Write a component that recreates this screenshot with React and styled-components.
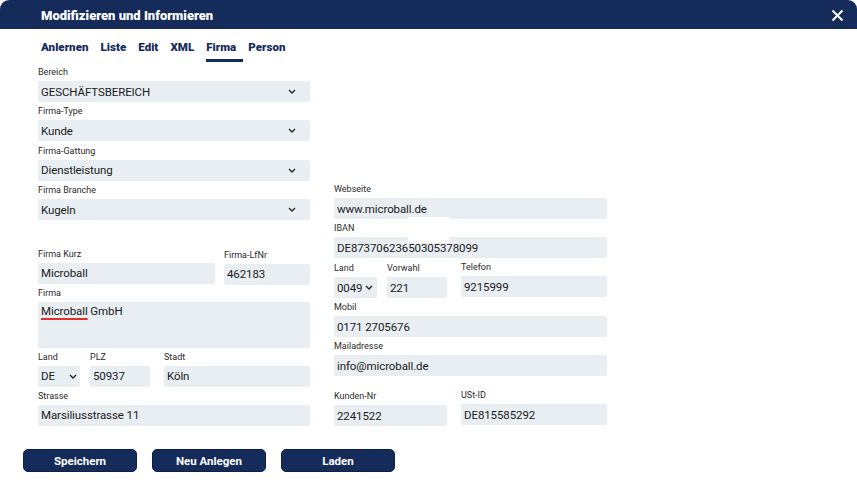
import React from "react";
import styled, { createGlobalStyle } from "styled-components";

const Global = createGlobalStyle`
  html, body { margin: 0; padding: 0; background: #fff; }
  body { font-family: Roboto, "Liberation Sans", sans-serif; color: #1b1b1b; }
  * { box-sizing: border-box; }
`;

const NAVY = "#152c5b";
const FIELD = "#e9eef3";

const Dialog = styled.div`
  width: 857px;
  height: 498px;
  background: #fff;
`;

const Header = styled.div`
  height: 29px;
  background: ${NAVY};
  border-radius: 9px 9px 0 0;
  display: flex;
  align-items: center;
  justify-content: space-between;
  padding: 0 13px 0 41px;
`;

const Title = styled.div`
  color: #fff;
  font-weight: 900;
  font-size: 13px;
  letter-spacing: 0;
  padding-top: 1px;
`;

const Close = styled.svg`
  width: 13px;
  height: 13px;
  margin-top: 2px;
`;

const Tabs = styled.div`
  display: flex;
  gap: 12px;
  padding: 11px 0 0 41px;
`;

const Tab = styled.div`
  font-weight: 900;
  font-size: 11.5px;
  letter-spacing: 0.05px;
  color: ${NAVY};
  padding-bottom: 8px;
  position: relative;
  ${(p) =>
    p.$active &&
    `&::after { content: ""; position: absolute; left: 0; bottom: 0; width: 37px; height: 3px; background: ${NAVY}; }`}
`;

const Body = styled.div`
  display: flex;
  gap: 24px;
  padding: 4px 0 0 38px;
`;

const Column = styled.div`
  width: ${(p) => p.$w}px;
  display: flex;
  flex-direction: column;
  margin-top: ${(p) => p.$top || 0}px;
  position: relative;
`;

const Row = styled.div`
  display: flex;
  gap: ${(p) => p.$gap || 10}px;
  align-items: flex-end;
  margin-top: ${(p) => p.$mt || 0}px;
`;

const Group = styled.div`
  display: flex;
  flex-direction: column;
  width: ${(p) => (p.$w ? `${p.$w}px` : "auto")};
  flex: ${(p) => (p.$w ? "none" : "1")};
  margin-left: ${(p) => p.$ml || 0}px;
  margin-bottom: ${(p) => p.$mb || 0}px;
`;

const Label = styled.div`
  font-size: 9px;
  line-height: 12px;
  height: 12px;
  color: #2a2a2a;
  margin: 0 0 3px 0;
  white-space: nowrap;
`;

const Field = styled.div`
  height: ${(p) => p.$h || 21}px;
  background: ${FIELD};
  border-radius: 2px;
  display: flex;
  align-items: ${(p) => (p.$area ? "flex-start" : "center")};
  justify-content: space-between;
  padding: ${(p) => (p.$area ? "2px 10px 0 3px" : `0 ${p.$pr ?? 14}px 0 3px`)};
  font-size: 11.5px;
  color: #1a1a1a;
  white-space: nowrap;
  margin-bottom: 3px;
`;

const Value = styled.span`
  letter-spacing: -0.1px;
`;

const Spell = styled.span`
  text-decoration: underline;
  text-decoration-color: #e0302c;
  text-decoration-thickness: 1.5px;
  text-underline-offset: 3px;
`;

const Chevron = () => (
  <svg width="8" height="5" viewBox="0 0 8 5" style={{ flex: "none" }}>
    <path d="M1 1l3 3 3-3" fill="none" stroke="#222" strokeWidth="1.3" />
  </svg>
);

const Select = ({ value, pr }) => (
  <Field $pr={pr}>
    <Value>{value}</Value>
    <Chevron />
  </Field>
);

const Buttons = styled.div`
  display: flex;
  gap: 15px;
  padding: 20px 0 0 23px;
`;

const Button = styled.button`
  width: 114px;
  height: 23px;
  background: ${NAVY};
  color: #fff;
  border: 1px solid #0d1f45;
  border-radius: 5px;
  font-family: Roboto, "Liberation Sans", sans-serif;
  font-weight: 700;
  font-size: 11.5px;
  padding: 0;
`;

const Cover = styled.div`
  position: absolute;
  left: 74px;
  top: 34px;
  width: 41px;
  height: 26px;
  background: #fff;
  pointer-events: none;
`;

export default function App() {
  return (
    <>
      <Global />
      <Dialog>
        <Header>
          <Title>Modifizieren und Informieren</Title>
          <Close viewBox="0 0 13 13">
            <path d="M1.5 1.5l10 10M11.5 1.5l-10 10" stroke="#fff" strokeWidth="2" />
          </Close>
        </Header>
        <Tabs>
          <Tab>Anlernen</Tab>
          <Tab>Liste</Tab>
          <Tab>Edit</Tab>
          <Tab>XML</Tab>
          <Tab $active>Firma</Tab>
          <Tab>Person</Tab>
        </Tabs>
        <Body>
          <Column $w={272}>
            <Group>
              <Label>Bereich</Label>
              <Select value="GESCHÄFTSBEREICH" />
            </Group>
            <Group>
              <Label>Firma-Type</Label>
              <Select value="Kunde" />
            </Group>
            <Group>
              <Label>Firma-Gattung</Label>
              <Select value="Dienstleistung" />
            </Group>
            <Group>
              <Label>Firma Branche</Label>
              <Select value="Kugeln" />
            </Group>
            <Row $gap={9} $mt={24}>
              <Group>
                <Label>Firma Kurz</Label>
                <Field><Value>Microball</Value></Field>
              </Group>
              <Group $w={86} $mb={-1}>
                <Label>Firma-LfNr</Label>
                <Field><Value>462183</Value></Field>
              </Group>
            </Row>
            <Group>
              <Label>Firma</Label>
              <Field $area $h={46}>
                <Value><Spell>Microball</Spell> GmbH</Value>
              </Field>
            </Group>
            <Row $gap={10}>
              <Group $w={42}>
                <Label>Land</Label>
                <Select value="DE" pr={3} />
              </Group>
              <Group $w={60}>
                <Label>PLZ</Label>
                <Field><Value>50937</Value></Field>
              </Group>
              <Group $ml={4}>
                <Label>Stadt</Label>
                <Field><Value>Köln</Value></Field>
              </Group>
            </Row>
            <Group>
              <Label>Strasse</Label>
              <Field><Value>Marsiliusstrasse 11</Value></Field>
            </Group>
          </Column>
          <Column $w={273} $top={117}>
            <Group>
              <Label>Webseite</Label>
              <Field><Value>www.microball.de</Value></Field>
            </Group>
            <Group>
              <Label>IBAN</Label>
              <Field><Value>DE87370623650305378099</Value></Field>
            </Group>
            <Cover />
            <Row $gap={10}>
              <Group $w={43}>
                <Label>Land</Label>
                <Select value="0049" pr={4} />
              </Group>
              <Group $w={60}>
                <Label>Vorwahl</Label>
                <Field><Value>221</Value></Field>
              </Group>
              <Group $ml={4} $mb={1}>
                <Label>Telefon</Label>
                <Field><Value>9215999</Value></Field>
              </Group>
            </Row>
            <Group>
              <Label>Mobil</Label>
              <Field><Value>0171 2705676</Value></Field>
            </Group>
            <Group>
              <Label>Mailadresse</Label>
              <Field><Value>info@microball.de</Value></Field>
            </Group>
            <Row $gap={14} $mt={10}>
              <Group $w={113}>
                <Label>Kunden-Nr</Label>
                <Field><Value>2241522</Value></Field>
              </Group>
              <Group $mb={1}>
                <Label>USt-ID</Label>
                <Field><Value>DE815585292</Value></Field>
              </Group>
            </Row>
          </Column>
        </Body>
        <Buttons>
          <Button>Speichern</Button>
          <Button>Neu Anlegen</Button>
          <Button>Laden</Button>
        </Buttons>
      </Dialog>
    </>
  );
}
